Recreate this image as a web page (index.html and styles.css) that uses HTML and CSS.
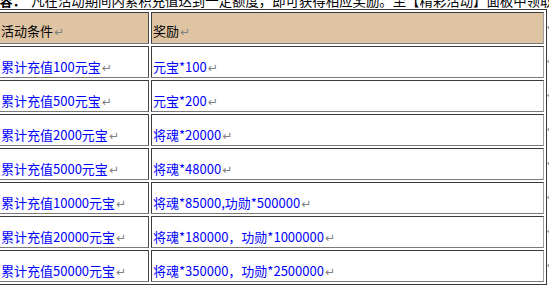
FILE: index.html
```html
<!DOCTYPE html>
<html lang="zh-CN">
<head>
<meta charset="utf-8">
<title>活动奖励</title>
<link rel="stylesheet" href="styles.css">
</head>
<body>
<div class="intro"><p class="intro-line"><b class="label">内容：</b>凡在活动期间内累积充值达到一定额度，即可获得相应奖励。至【精彩活动】面板中领取</p></div>
<table class="rewards">
  <tr class="head">
    <td class="c1"><span class="t">活动条件</span><span class="ret">↵</span></td>
    <td class="c2"><span class="t">奖励</span><span class="ret">↵</span></td>
  </tr>
  <tr>
    <td class="c1"><span class="t">累计充值100元宝</span><span class="ret">↵</span></td>
    <td class="c2"><span class="t">元宝*100</span><span class="ret">↵</span></td>
  </tr>
  <tr>
    <td class="c1"><span class="t">累计充值500元宝</span><span class="ret">↵</span></td>
    <td class="c2"><span class="t">元宝*200</span><span class="ret">↵</span></td>
  </tr>
  <tr>
    <td class="c1"><span class="t">累计充值2000元宝</span><span class="ret">↵</span></td>
    <td class="c2"><span class="t">将魂*20000</span><span class="ret">↵</span></td>
  </tr>
  <tr>
    <td class="c1"><span class="t">累计充值5000元宝</span><span class="ret">↵</span></td>
    <td class="c2"><span class="t">将魂*48000</span><span class="ret">↵</span></td>
  </tr>
  <tr>
    <td class="c1"><span class="t">累计充值10000元宝</span><span class="ret">↵</span></td>
    <td class="c2"><span class="t">将魂*85000,功勋*500000</span><span class="ret">↵</span></td>
  </tr>
  <tr>
    <td class="c1"><span class="t">累计充值20000元宝</span><span class="ret">↵</span></td>
    <td class="c2"><span class="t">将魂*180000，功勋*1000000</span><span class="ret">↵</span></td>
  </tr>
  <tr>
    <td class="c1"><span class="t">累计充值50000元宝</span><span class="ret">↵</span></td>
    <td class="c2"><span class="t">将魂*350000，功勋*2500000</span><span class="ret">↵</span></td>
  </tr>
</table>
</body>
</html>
```

FILE: styles.css
```css
html, body {
  margin: 0;
  padding: 0;
  background: #ffffff;
  overflow: hidden;
}

body {
  font-family: "Noto Sans CJK SC", "Liberation Sans", sans-serif;
  color: #000;
}

.intro {
  height: 9px;
  overflow: hidden;
}

.intro-line {
  margin: -10px 0 0 -14px;
  font-size: 13.4px;
  line-height: 20px;
  white-space: nowrap;
}

.label {
  font-weight: bold;
  margin-right: 5px;
}

.rewards {
  margin-left: -4px;
  width: 551px;
  table-layout: fixed;
  border-collapse: separate;
  border-spacing: 2px;
  border: 1px solid #3a3a3a;
}

.rewards td {
  box-sizing: border-box;
  height: 32px;
  padding: 0 1px 0 1px;
  vertical-align: bottom;
  border-top: 1px solid #3a3a3a;
  border-left: 1px solid #3a3a3a;
  border-bottom: 1px solid #7a7a7a;
  border-right: 1px solid #a0a0a0;
  font-size: 13px;
  line-height: 17px;
  color: #0000ff;
  white-space: nowrap;
  position: relative;
}

.rewards td.c1 {
  width: 150px;
  border-right-color: #4a4a4a;
}

.rewards td.c2 {
  width: 393px;
}

.rewards td.c2::after {
  content: "";
  position: absolute;
  right: -7px;
  top: 12px;
  width: 3px;
  height: 5px;
  background: #9a9a9a;
  clip-path: polygon(100% 0, 100% 100%, 0 50%);
}

.rewards .head td {
  background: #dfc4a3;
  color: #000;
  padding-bottom: 2px;
}

.ret {
  font-family: "DejaVu Sans", sans-serif;
  font-size: 12px;
  color: #808080;
  margin-left: 1px;
}
```
